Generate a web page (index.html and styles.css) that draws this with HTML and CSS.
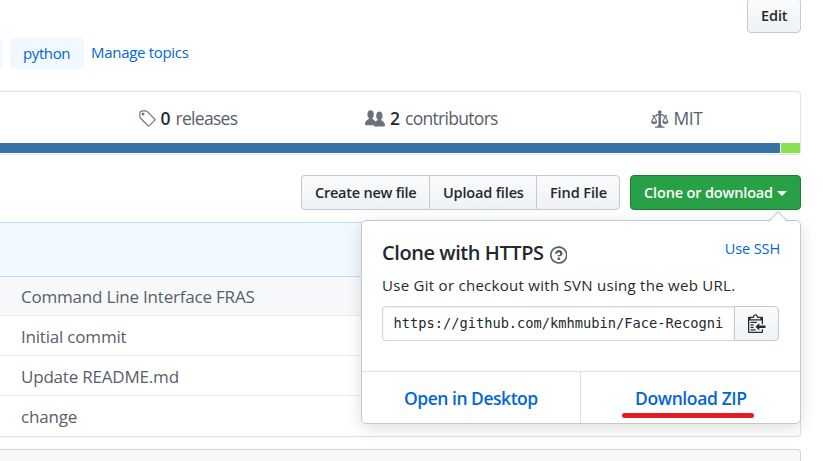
FILE: index.html
```html
<!DOCTYPE html>
<html lang="en">
<head>
<meta charset="utf-8">
<title>Repository</title>
<link rel="stylesheet" href="styles.css">
</head>
<body>
<main class="repo">
  <div class="repo-head"><button class="btn btn-edit">Edit</button></div>
  <div class="topics">
    <span class="topic topic-cut"></span>
    <a class="topic">python</a>
    <a class="manage">Manage topics</a>
  </div>
  <section class="summary">
    <ul class="stats">
      <li class="stat stat-releases">
        <svg class="icon" width="17.5" height="20" viewBox="0 0 14 16"><path fill-rule="evenodd" d="M7.73 1.73C7.26 1.26 6.62 1 5.96 1H3.5C2.13 1 1 2.13 1 3.5v2.47c0 .66.27 1.3.73 1.77l6.06 6.06c.39.39 1.02.39 1.41 0l4.59-4.59a.996.996 0 0 0 0-1.41L7.73 1.73zM2.38 7.09c-.31-.3-.47-.7-.47-1.13V3.5c0-.88.72-1.59 1.59-1.59h2.47c.42 0 .83.16 1.13.47l6.14 6.13-4.73 4.73-6.13-6.15zM3.01 3h2v2H3V3h.01z"/></svg>
        <b>0</b><span>releases</span>
      </li>
      <li class="stat stat-people">
        <svg class="icon" width="20" height="20" viewBox="0 0 16 16"><path fill-rule="evenodd" d="M16 12.999c0 .439-.45 1-1 1H7.995c-.539 0-.994-.447-.995-.999H1c-.54 0-1-.561-1-1 0-2.634 3-4 3-4s.229-.409 0-1c-.841-.621-1.058-.59-1-3 .058-2.419 1.367-3 2.5-3s2.442.58 2.5 3c.058 2.41-.159 2.379-1 3-.229.59 0 1 0 1s1.549.711 2.42 2.088C9.196 9.369 10 8.999 10 8.999s.229-.409 0-1c-.841-.62-1.058-.59-1-3 .058-2.419 1.367-3 2.5-3s2.437.581 2.495 3c.059 2.41-.158 2.38-1 3-.229.59 0 1 0 1s3.005 1.366 3.005 4z"/></svg>
        <b>2</b><span>contributors</span>
      </li>
      <li class="stat stat-license">
        <svg class="icon" width="17.5" height="20" viewBox="0 0 14 16"><path fill-rule="evenodd" d="M7 4c-.83 0-1.5-.67-1.5-1.5S6.17 1 7 1s1.5.67 1.5 1.5S7.83 4 7 4zm7 6c0 1.11-.89 2-2 2h-1c-1.11 0-2-.89-2-2l2-4h-1c-.55 0-1-.45-1-1H8v8c.42 0 1 .45 1 1h1c.42 0 1 .45 1 1H3c0-.55.58-1 1-1h1c0-.55.58-1 1-1h.03L6 5H5c0 .55-.45 1-1 1H3l2 4c0 1.11-.89 2-2 2H2c-1.11 0-2-.89-2-2l2-4H1V5h3c0-.55.45-1 1-1h4c.55 0 1 .45 1 1h3v1h-1l2 4zM2.5 7L1 10h3L2.5 7zM13 10l-1.5-3-1.5 3h3z"/></svg>
        <span>MIT</span>
      </li>
    </ul>
    <div class="langs"><i class="lang-python"></i><i class="lang-shell"></i></div>
  </section>
  <div class="actions">
    <div class="group">
      <button class="btn btn-create">Create new file</button>
      <button class="btn btn-upload">Upload files</button>
      <button class="btn btn-find">Find File</button>
    </div>
    <div class="clone">
      <button class="btn btn-primary">Clone or download<i class="caret"></i></button>
      <div class="popover">
        <div class="popover-body">
          <div class="popover-head">
            <h4>Clone with HTTPS</h4>
            <svg class="help" width="17.5" height="20" viewBox="0 0 14 16"><path fill-rule="evenodd" d="M6 10h2v2H6v-2zm4-3.5C10 8.64 8 9 8 9H6c0-.55.45-1 1-1h.5c.28 0 .5-.22.5-.5v-1c0-.28-.22-.5-.5-.5h-1c-.28 0-.5.22-.5.5V7H4c0-1.5 1.5-3 3-3s3 1 3 2.5zM7 2.3c3.14 0 5.7 2.56 5.7 5.7s-2.56 5.7-5.7 5.7A5.71 5.71 0 0 1 1.3 8c0-3.14 2.56-5.7 5.7-5.7zM7 1C3.14 1 0 4.14 0 8s3.14 7 7 7 7-3.14 7-7-3.14-7-7-7z"/></svg>
            <a class="ssh">Use SSH</a>
          </div>
          <p class="hint">Use Git or checkout with SVN using the web URL.</p>
          <div class="url">
            <div class="url-field"><span>https://github.com/kmhmubin/Face-Recogni</span></div>
            <button class="btn btn-copy"><svg width="17.5" height="20" viewBox="0 0 14 16"><path fill-rule="evenodd" d="M2 13h4v1H2v-1zm5-6H2v1h5V7zm2 3V8l-3 3 3 3v-2h5v-2H9zM4.5 9H2v1h2.5V9zM2 12h2.5v-1H2v1zm9 1h1v2c-.02.28-.11.52-.3.7-.19.18-.42.28-.7.3H1c-.55 0-1-.45-1-1V4c0-.55.45-1 1-1h3c0-1.11.89-2 2-2 1.11 0 2 .89 2 2h3c.55 0 1 .45 1 1v5h-1V6H1v9h10v-2zM2 5h8c0-.55-.45-1-1-1H8c-.55 0-1-.45-1-1s-.45-1-1-1-1 .45-1 1-.45 1-1 1H3c-.55 0-1 .45-1 1z"/></svg></button>
          </div>
        </div>
        <div class="popover-foot">
          <a class="open-desktop">Open in Desktop</a>
          <a class="download-zip">Download ZIP<i class="marker"></i></a>
        </div>
      </div>
    </div>
  </div>
  <section class="files">
    <div class="commit-bar"></div>
    <div class="row row-hover">Command Line Interface FRAS</div>
    <div class="row">Initial commit</div>
    <div class="row">Update README.md</div>
    <div class="row">change</div>
  </section>
  <section class="readme"></section>
</main>
</body>
</html>
```

FILE: styles.css
```css
* { box-sizing: border-box; }
html, body { height: 100%; }
body {
  margin: 0;
  overflow: hidden;
  background: #fff;
  color: #24292e;
  font-family: "Open Sans", "Noto Sans", sans-serif;
}
a { color: #0366d6; text-decoration: none; white-space: nowrap; }
.repo { width: 801px; height: 461px; overflow: visible; }

.btn {
  display: flex;
  align-items: center;
  height: 35px;
  margin: 0;
  padding: 0 0 0 13px;
  border: 1px solid #c5c9cd;
  border-radius: 4px;
  background: linear-gradient(180deg, #fafbfc, #eff3f6 90%);
  color: #24292e;
  font: 550 14.5px/20px "Open Sans", "Noto Sans", sans-serif;
  white-space: nowrap;
}
.repo-head { display: flex; justify-content: flex-end; height: 33px; align-items: flex-end; }
.btn-edit { width: 54px; letter-spacing: -.1px; }

.topics { display: flex; height: 31px; margin-top: 5px; }
.topic {
  width: 74px;
  padding-left: 13px;
  border-radius: 4px;
  background: #f1f8ff;
  font-size: 15px;
  line-height: 30px;
  letter-spacing: -.4px;
}
.topic-cut { width: 2px; margin-right: 8px; padding: 0; border-radius: 0 4px 4px 0; }
.manage { margin-left: 7px; font-size: 15px; line-height: 29px; letter-spacing: -.3px; }

.summary {
  height: 64px;
  margin-top: 22px;
  border: 1px solid #dfe2e5;
  border-left: 0;
  border-radius: 0 4px 4px 0;
}
.stats { display: flex; height: 51px; margin: 0; padding: 0; list-style: none; }
.stat { display: flex; align-items: center; color: #586069; font-size: 17.5px; white-space: nowrap; padding-top: 3px; }
.stat b, .stat span { margin-top: -2px; }
.stat b { color: #24292e; font-weight: 600; margin-right: 5px; }
.stat span { letter-spacing: -.7px; }
.icon { fill: #6a737d; flex: none; }
.stat .icon { margin-right: 5px; }
.stat-releases { width: 365px; padding-left: 138px; }
.stat-people { width: 286px; }
.stat.stat-license span { letter-spacing: -.4px; }
.langs { display: flex; gap: 1px; height: 10px; }
.lang-python { width: 780px; background: #3572a5; }
.lang-shell { flex: 1; background: #89e051; }

.actions { display: flex; justify-content: flex-end; gap: 10px; height: 35px; margin-top: 20px; }
.group { display: flex; }
.btn-create { width: 128px; border-radius: 4px 0 0 4px; border-right: 0; letter-spacing: -.23px; }
.btn-upload { width: 107px; border-radius: 0; border-right: 0; letter-spacing: -.16px; }
.btn-find { width: 84px; border-radius: 0 4px 4px 0; letter-spacing: -.1px; }
.clone { position: relative; }
.btn-primary {
  width: 171px;
  border-color: #1f7a35;
  background: #28a045;
  color: #fff;
  font-weight: 600;
  letter-spacing: -.15px;
}
.caret {
  margin: 2px 0 0 4px;
  border: 5px solid transparent;
  border-top-color: #fff;
  border-bottom: 0;
}

.popover {
  position: absolute;
  top: 45px;
  right: 0;
  width: 440px;
  height: 204px;
  border: 1px solid #c6c9cc;
  border-radius: 5px;
  background: #fff;
  box-shadow: 0 4px 15px rgba(27, 31, 35, .15);
}
.popover::before {
  content: "";
  position: absolute;
  top: -7px;
  right: 15px;
  width: 13px;
  height: 13px;
  border: 1px solid #c6c9cc;
  border-right: 0;
  border-bottom: 0;
  background: linear-gradient(135deg, #fff 52%, transparent 52%);
  transform: rotate(45deg);
}
.popover-body { height: 150px; padding: 18px 20px 0 20px; }
.popover-head { display: flex; height: 30px; }
.popover-head h4 { margin: 0; font-size: 20px; line-height: 27px; font-weight: 550; letter-spacing: -.43px; white-space: nowrap; }
.help { margin: 6px 0 0 6px; fill: #586069; }
.ssh { margin-left: auto; font-size: 14.5px; line-height: 20px; letter-spacing: -.1px; }
.hint { margin: 6px 0 0; font-size: 15px; line-height: 20px; letter-spacing: .28px; white-space: nowrap; }
.url { display: flex; width: 397px; margin-top: 11px; }
.url-field {
  width: 352px;
  height: 35px;
  padding-left: 10.5px;
  border: 1px solid #d1d5da;
  border-right: 0;
  border-radius: 4px 0 0 4px;
  box-shadow: inset 0 1px 2px rgba(27, 31, 35, .075);
  font: 13.7px/32px "DejaVu Sans Mono", monospace;
  white-space: nowrap;
}
.btn-copy { width: 45px; border-radius: 0 4px 4px 0; }
.btn-copy svg { margin-bottom: 2px; fill: #24292e; }
.popover-foot { display: flex; height: 52px; border-top: 1px solid #dfe2e5; font-size: 17.5px; line-height: 53px; font-weight: 550; letter-spacing: -.48px; }
.open-desktop { width: 219px; padding-left: 42px; border-right: 1px solid #dfe2e5; }
.download-zip { position: relative; flex: 1; padding-left: 54px; letter-spacing: -.38px; }
.marker { position: absolute; left: 41px; top: 41px; width: 132px; height: 5px; border-radius: 3px; background: #e51c20; }

.files {
  height: 215px;
  margin-top: 12px;
  border: 1px solid #dfe2e5;
  border-left: 0;
  border-top-color: #c0ddfb;
  border-radius: 0 4px 4px 0;
}
.commit-bar { height: 54px; border-bottom: 1px solid #c0ddfb; background: #f1f8ff; }
.row { height: 40px; padding-left: 21px; border-bottom: 1px solid #eaecef; color: #586069; font-size: 17px; line-height: 41px; letter-spacing: -.2px; white-space: nowrap; }
.row-hover { height: 39px; line-height: 40px; background: #f6f8fa; }
.row:last-child { border-bottom: 0; }
.readme { height: 30px; margin-top: 12px; border: 1px solid #d1d5da; border-left: 0; border-radius: 0 4px 0 0; background: #f6f8fa; }
```
